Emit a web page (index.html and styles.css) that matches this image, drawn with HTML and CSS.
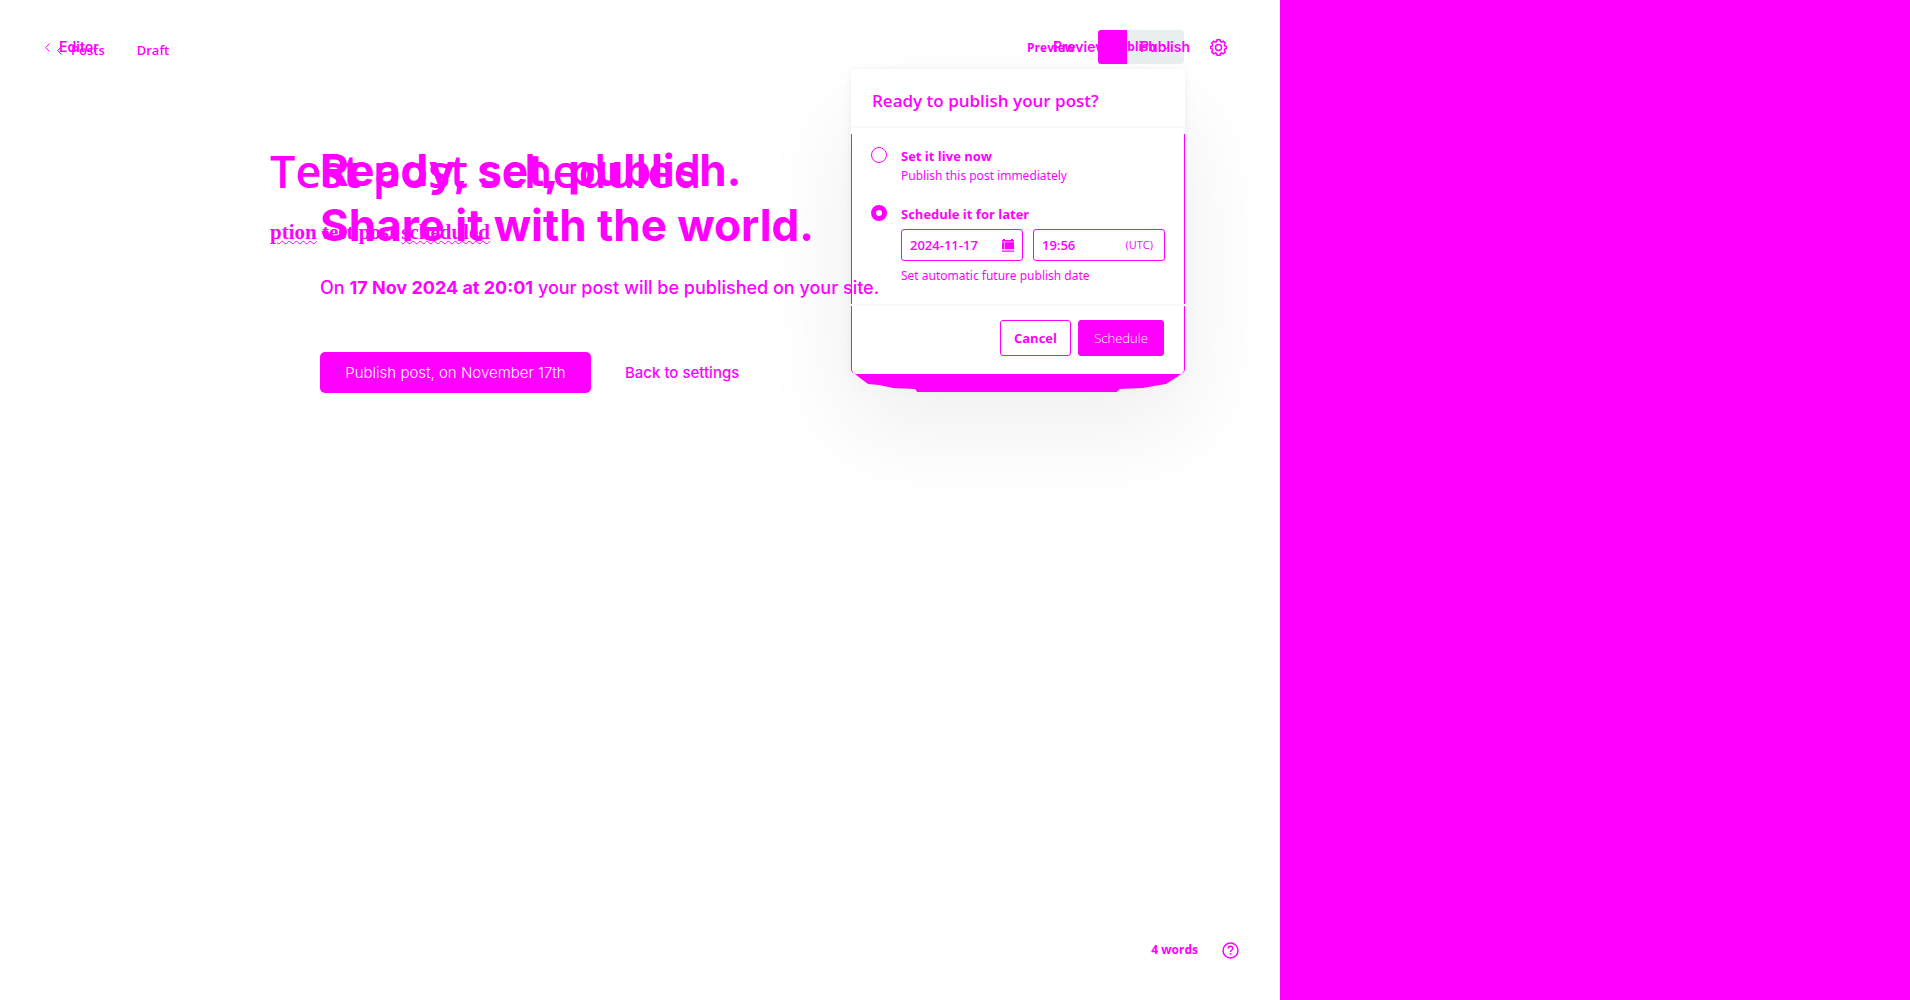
FILE: index.html
```html
<!DOCTYPE html>
<html lang="en">
<head>
<meta charset="utf-8">
<title>Test post scheduled</title>
<link rel="stylesheet" href="styles.css">
</head>
<body>
<div class="page">
  <div class="stage">
    <section class="layer editor">
      <header class="bar editor-bar">
        <nav class="left">
          <a class="back" href="#"><svg class="chevron" viewBox="0 0 5 9"><path d="M4.500.5L.7 4.500l3.800 4"/></svg>Posts</a>
          <span class="status">Draft</span>
        </nav>
        <div class="right">
          <button class="text-button" type="button">Preview</button>
          <div class="publish-menu">
            <button class="publish-button" type="button">Publish <svg class="caret" viewBox="0 0 8 5"><path d="M.5.5L4 4 7.500.5"/></svg></button>
            <form class="popover">
              <h2>Ready to publish your post?</h2>
              <div class="options">
                <div class="option">
                  <input type="radio" name="when" id="now">
                  <div><label for="now">Set it live now</label><p>Publish this post immediately</p></div>
                </div>
                <div class="option">
                  <input type="radio" name="when" id="later" checked>
                  <div class="grow">
                    <label for="later">Schedule it for later</label>
                    <div class="fields">
                      <div class="field date">
                        <input type="text" aria-label="Date" value="2024-11-17">
                        <svg width="12" height="13" viewBox="0 0 12 13"><path fill="currentColor" d="M0 1h1V0h2v1h6V0h2v1h1v9H0zM0 10.700h12v.8H0zM0 12.200h12v.8H0z"/><path stroke="#fff" stroke-width=".6" d="M0 2.800h12M2.500 3v7"/></svg>
                      </div>
                      <div class="field time">
                        <input type="text" aria-label="Time" value="19:56">
                        <span>(UTC)</span>
                      </div>
                    </div>
                    <p>Set automatic future publish date</p>
                  </div>
                </div>
              </div>
              <div class="actions">
                <button class="cancel" type="button">Cancel</button>
                <button class="schedule" type="button">Schedule</button>
              </div>
              <svg class="under" viewBox="0 0 333 18" preserveAspectRatio="none"><path fill="#f0f" d="M4 0h325l-4 3-11 7-12 2-11 2-23 1-3 3H66l-2-3-22-1-14-3-11-1-8-6z"/></svg>
            </form>
          </div>
          <button class="icon-button" type="button" aria-label="Settings">
            <svg width="17" height="17" viewBox="0 0 17 17"><path d="M7 .8h3l.5 2 1 .4 1.800-1 2 2-1 1.800.4 1 1.800.5v2l-1.800.6-.4 1 1 1.800-2 2-1.800-1-1 .4-.5 2H7l-.5-2-1-.4-1.800 1-2-2 1-1.800-.4-1L.6 9.500v-2L2.300 7l.4-1-1-1.800 2-2 1.800 1 1-.4z"/><circle cx="8.500" cy="8.500" r="3"/></svg>
          </button>
        </div>
      </header>
      <main class="post">
        <h1>Test post scheduled</h1>
        <p><span class="misspelt">ption</span> test post <span class="misspelt">scheduled</span></p>
      </main>
      <footer class="footer">
        <span>4 words</span>
        <a href="#" aria-label="Help"><svg width="17" height="17" viewBox="0 0 17 17"><circle cx="8.500" cy="8.500" r="7.500"/><path d="M6.200 6.600c0-3 4.600-3 4.600-.2C10.800 8 8.500 8 8.500 10M8.500 11.300v1.500"/></svg></a>
      </footer>
    </section>
    <section class="layer flow">
      <header class="bar flow-bar">
        <a class="back" href="#"><svg class="chevron" viewBox="0 0 5 9"><path d="M4.500.5L.7 4.500l3.800 4"/></svg>Editor</a>
        <div class="flow-right">
          <button class="text-button" type="button">Preview</button>
          <button class="text-button" type="button">Publish</button>
        </div>
      </header>
      <main class="confirm">
        <h1>Ready, set, publish.<br>Share it with the world.</h1>
        <p>On <strong>17 Nov 2024 at 20:01</strong> your post will be published on your site.</p>
        <div class="choices">
          <button class="confirm-button" type="button">Publish post, on November 17th</button>
          <button class="back-button" type="button">Back to settings</button>
        </div>
      </main>
    </section>
  </div>
  <aside class="panel"></aside>
</div>
</body>
</html>
```

FILE: styles.css
```css
* { box-sizing: border-box; }
body { margin: 0; background: #fff; color: #f0f; }
h1, h2, p { margin: 0; }
a { color: inherit; text-decoration: none; }
button { border: 0; padding: 0; background: none; color: inherit; font: inherit; white-space: nowrap; cursor: pointer; }
svg { display: block; flex: none; }

.page { display: grid; grid-template-columns: 128fr 63fr; min-height: 100vh; }
.panel { background: #f0f; }
.stage { display: grid; min-width: 0; }
.layer { grid-area: 1 / 1; min-width: 0; display: flex; flex-direction: column; }
.editor { font: 700 12px/20px "Open Sans", sans-serif; }
.flow { font: 600 14px/20px Inter, sans-serif; z-index: 2; pointer-events: none; }
.flow a, .flow button { pointer-events: auto; }

.bar { display: flex; justify-content: space-between; align-items: center; height: 94px; }
.editor-bar { padding: 0 53px 0 57px; }
.flow-bar { padding: 0 90px 0 45px; }
.left { display: flex; gap: 32px; padding-top: 6px; font-size: 13px; font-weight: 600; }
.right { display: flex; align-items: center; }
.flow-right { display: flex; gap: 33px; }
.back { display: flex; align-items: center; gap: 9px; }
.chevron { width: 5px; height: 9px; }
.caret { width: 8px; height: 5px; }
.chevron, .caret, .icon-button svg, .footer svg { fill: none; stroke: currentColor; stroke-width: 1; }
.icon-button svg, .footer svg { stroke-width: 1.500; }
.editor .text-button { margin-right: 23px; padding-top: 2px; }

.publish-menu { position: relative; margin-right: 26px; }
.publish-button { display: flex; align-items: center; justify-content: center; gap: 6px; width: 86px; height: 34px; border-radius: 3px; background: linear-gradient(90deg, #f0f 29px, #e9eef1 29px); }

.popover { position: absolute; top: calc(100% + 5px); right: -1px; width: 334px; border-radius: 5px; background: #fff; font: 13px/20px "Open Sans", sans-serif; box-shadow: 0 0 7px rgba(0,0,0,.05), 0 50px 100px rgba(0,0,0,.07), 0 10px 24px rgba(0,0,0,.02); }
.popover h2 { padding: 22px 21px 15px; border-bottom: 2px solid #fafafa; font: 600 17px/20px "Open Sans", sans-serif; }
.options { display: flex; flex-direction: column; gap: 18px; padding: 18px 20px; background: linear-gradient(#f0f, #f0f) 0 6px / 1px 100% no-repeat, linear-gradient(#f0f, #f0f) 100% 6px / 1px 100% no-repeat; border-bottom: 2px solid #fafafa; }
.option { display: flex; gap: 14px; }
.option input[type="radio"] { appearance: none; flex: none; width: 16px; height: 16px; margin: 1px 0 0; border: 1px solid #f0f; border-radius: 50%; }
.option input[type="radio"]:checked { border-width: 5px; }
.option label { display: block; font-weight: 700; line-height: 20px; }
.grow { flex: 1; min-width: 0; }
.option p { font: 12px/20px "Noto Sans", sans-serif; }
.fields { display: flex; gap: 10px; margin: 5px 0; }
.field { display: flex; align-items: center; height: 32px; padding: 0 8px; border: 1px solid #f0f; border-radius: 3px; }
.field input { flex: 1; width: 0; min-width: 0; border: 0; padding: 0; background: none; color: inherit; font: 600 13px/20px "Open Sans", sans-serif; outline: 0; }
.field span { padding-right: 3px; font-size: 11px; }
.date { flex: none; width: 122px; }
.time { flex: 1; min-width: 0; }
.actions { display: flex; justify-content: flex-end; gap: 7px; padding: 14px 20px 18px; border: solid #f0f; border-width: 0 1px; border-radius: 0 0 5px 5px; }
.actions button { height: 36px; border: 1px solid #f0f; border-radius: 3px; }
.cancel { width: 71px; font-weight: 700; }
.schedule { width: 86px; background: #f0f; color: #fff; font: 300 13px/20px "Open Sans", sans-serif; }
.under { position: absolute; top: 100%; left: 0; width: 100%; height: 18px; }

.post { flex: 1; padding: 44px 96px 0 270px; }
.post h1 { font: 600 45px/66px "Open Sans", sans-serif; }
.post p { margin-top: 13px; font: 700 21px/30px "Liberation Serif", serif; }
.misspelt { text-decoration: underline wavy #f0f 1px; }

.footer { display: flex; justify-content: flex-end; align-items: center; gap: 24px; height: 100px; padding: 0 41px; }

.confirm { padding: 49px 0 0 320px; }
.confirm h1 { font: 700 44px/55px Inter, sans-serif; white-space: nowrap; }
.confirm p { margin-top: 23px; font-size: 18px; font-weight: 500; line-height: 24px; white-space: nowrap; }
.confirm strong { font-weight: 700; }
.choices { display: flex; align-items: center; gap: 34px; margin-top: 52px; }
.confirm-button { width: 271px; height: 41px; border-radius: 5px; background: #f0f; color: #fff; font: 300 15px/20px Inter, sans-serif; }
.back-button { font-size: 15px; font-weight: 500; }
```
